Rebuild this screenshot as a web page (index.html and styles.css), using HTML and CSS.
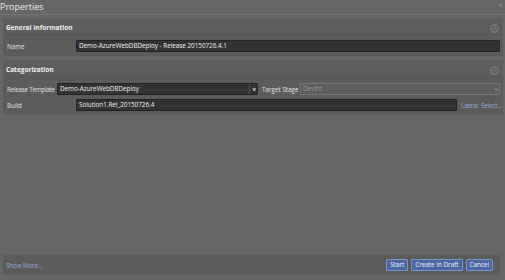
FILE: index.html
```html
<!DOCTYPE html>
<html>
<head>
<meta charset="utf-8">
<link rel="stylesheet" href="styles.css">
</head>
<body>
<div class="window">
  <div class="titlebar">
    <span class="title">Properties</span>
    <span class="close">×</span>
  </div>
  <div class="content">
    <section class="panel">
      <div class="panel-head">
        <span>General Information</span>
        <span class="collapse"><svg viewBox="0 0 10 10" width="9" height="9"><circle cx="5" cy="5" r="4.3" fill="#636363" stroke="#8a8a8a" stroke-width="0.9"/><path d="M3.2 5.8 L5 4 L6.8 5.8" fill="none" stroke="#8a8a8a" stroke-width="0.9"/></svg></span>
      </div>
      <div class="panel-body pb1">
        <div class="row">
          <span class="label w-name">Name</span>
          <div class="input grow">Demo-AzureWebDBDeploy - Release 20150726.4.1</div>
        </div>
      </div>
    </section>
    <section class="panel">
      <div class="panel-head">
        <span>Categorization</span>
        <span class="collapse"><svg viewBox="0 0 10 10" width="9" height="9"><circle cx="5" cy="5" r="4.3" fill="#636363" stroke="#8a8a8a" stroke-width="0.9"/><path d="M3.2 5.8 L5 4 L6.8 5.8" fill="none" stroke="#8a8a8a" stroke-width="0.9"/></svg></span>
      </div>
      <div class="panel-body pb2">
        <div class="row">
          <span class="label w-rt">Release Template</span>
          <div class="input select sel-rt"><span>Demo-AzureWebDBDeploy</span><span class="arrow">v</span></div>
          <span class="label w-ts">Target Stage</span>
          <div class="input select disabled grow"><span>DevInt</span><span class="arrow">v</span></div>
        </div>
        <div class="row">
          <span class="label w-name">Build</span>
          <div class="input build">Solution1.Rel_20150726.4</div>
          <span class="link">Latest</span>
          <span class="link">Select...</span>
        </div>
      </div>
    </section>
  </div>
  <div class="footer">
    <span class="link">Show More...</span>
    <div class="buttons">
      <span class="btn">Start</span>
      <span class="btn">Create In Draft</span>
      <span class="btn">Cancel</span>
    </div>
  </div>
</div>
</body>
</html>
```
FILE: styles.css
```css
html, body {
  margin: 0;
  padding: 0;
}
* {
  box-sizing: border-box;
}
body {
  background: #666666;
  font-family: "Open Sans", "Noto Sans", sans-serif;
  color: #e6e6e6;
  width: 505px;
  height: 280px;
  overflow: hidden;
}
.window {
  height: 280px;
  display: flex;
  flex-direction: column;
}
.titlebar {
  height: 15px;
  display: flex;
  justify-content: space-between;
  align-items: center;
  border-bottom: 1px solid #747474;
  padding: 0 2px 0 0;
}
.title {
  font-size: 9px;
  color: #e8e8e8;
  line-height: 12px;
}
.close {
  font-size: 8px;
  color: #999;
  line-height: 8px;
  margin-top: -4px;
}
.content {
  flex: 1;
  display: flex;
  flex-direction: column;
  gap: 4px;
  padding: 3px 2px 0 3px;
}
.panel {
  background: #5b5b5b;
  border-radius: 2px;
}
.panel-head {
  height: 17px;
  display: flex;
  justify-content: space-between;
  align-items: center;
  padding: 2px 4px 0 3px;
  font-size: 6.5px;
  font-weight: bold;
  color: #f0f0f0;
  border-bottom: 1px solid #555;
  background: #5d5d5d;
}
.collapse {
  display: flex;
  margin-top: 2px;
}
.panel-body {
  display: flex;
  flex-direction: column;
  gap: 4px;
  padding-left: 4px;
  padding-right: 3px;
}
.pb1 { padding-top: 5px; padding-bottom: 4px; }
.pb2 { padding-top: 6px; padding-bottom: 4px; }
.row {
  display: flex;
  align-items: center;
  height: 12px;
  font-size: 6.3px;
  white-space: nowrap;
}
.label {
  color: #e0e0e0;
  flex: none;
}
.w-name { width: 69px; }
.w-rt { width: 50px; letter-spacing: -0.25px; }
.w-ts { width: 38px; margin-left: 4px; }
.input {
  height: 12px;
  line-height: 10px;
  background: #333333;
  border: 1px solid #232323;
  border-radius: 1px;
  color: #f2f2f2;
  padding: 0 2px;
  white-space: nowrap;
  overflow: hidden;
}
.grow { flex: 1; }
.select {
  display: flex;
  justify-content: space-between;
}
.sel-rt { width: 201px; flex: none; }
.arrow {
  font-size: 6px;
  font-weight: bold;
  color: #ddd;
  padding-left: 3px;
  border-left: 1px solid #555;
  margin-right: -1px;
}
.disabled {
  background: #5e5e5e;
  border-color: #777;
  color: #9a9a9a;
}
.disabled .arrow {
  color: #888;
  border-left: none;
}
.build { width: 381px; flex: none; margin-right: 4px; }
.link {
  color: #93a9d8;
  margin-right: 3px;
  font-size: 6.3px;
  letter-spacing: -0.15px;
}
.footer {
  margin: 0 5px 5px 3px;
  height: 20px;
  background: #5b5b5b;
  display: flex;
  align-items: center;
  justify-content: space-between;
  padding: 0 7px 0 3px;
}
.footer .link {
  font-size: 6.3px;
}
.buttons {
  display: flex;
  gap: 3px;
}
.btn {
  font-size: 6.3px;
  color: #f2f2f2;
  background: #4a67a4;
  border: 1px solid #7d93c2;
  height: 12px;
  line-height: 10px;
  padding: 0 3px;
  border-radius: 1px;
}
```
